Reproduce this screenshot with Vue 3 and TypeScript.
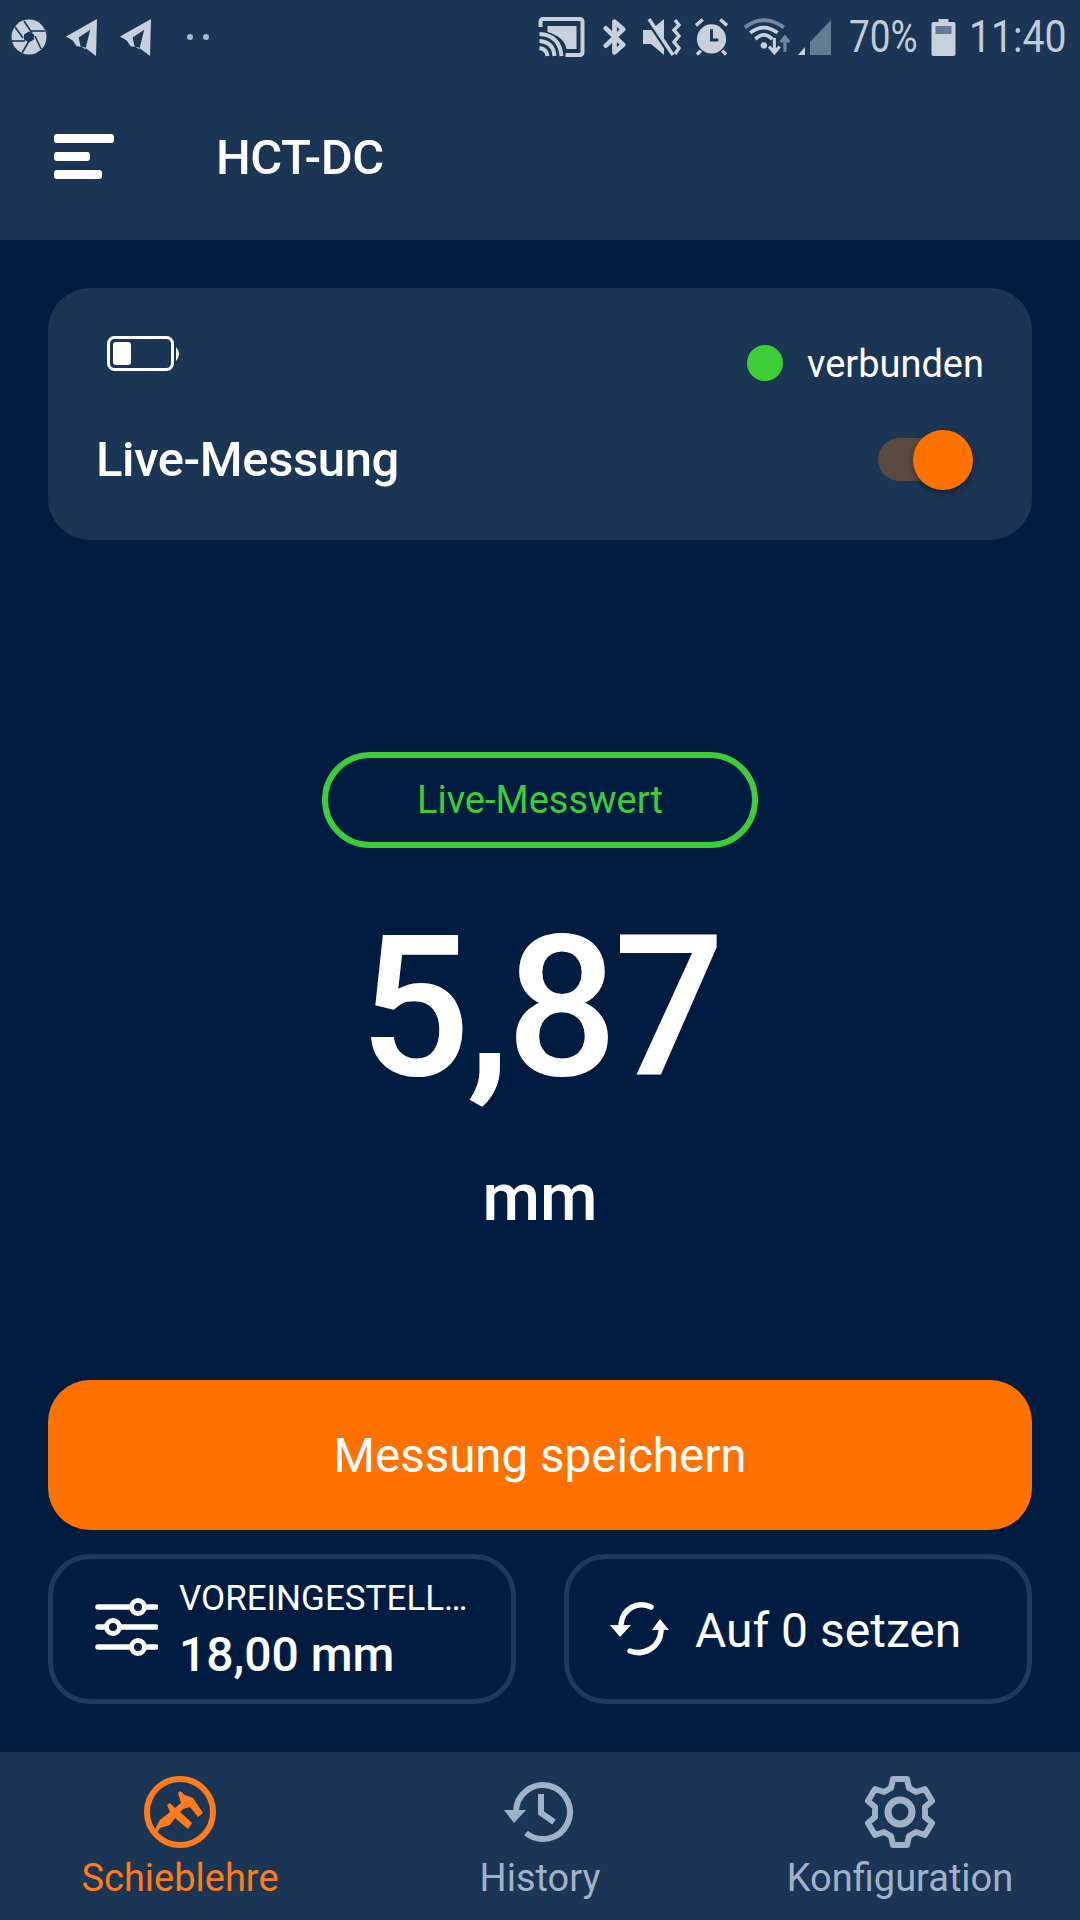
<script setup lang="ts">
const title = 'HCT-DC'
const reading = '5,87'
</script>

<template>
  <div class="screen">
    <header class="top">
      <div class="status">
        <div class="status-left">
          <svg class="s-aperture" viewBox="0 0 36 36"><circle cx="18" cy="18" r="17.500" fill="#c8d1db"/><g stroke="#1b3654" stroke-width="1.600" fill="none"><path d="M13 2 L21 14"/><path d="M34 12 L20 12"/><path d="M30 30 L24 17"/><path d="M11 34 L18 22"/><path d="M1 22 L14 22"/><path d="M4 8 L12 19"/></g><path d="M18 12.500 L23 15.500 L23 20.500 L18 23.500 L13 20.500 L13 15.500 Z" fill="#1b3654"/></svg>
          <svg class="s-plane" viewBox="0 0 32 38"><path fill="#c8d1db" fill-rule="evenodd" d="M32 0 L31 38 L19 29 L11 28 L7 22 L0 18 Z M13 19 L25 11 L20 31 L15 28 Z"/></svg>
          <svg class="s-plane" viewBox="0 0 32 38"><path fill="#c8d1db" fill-rule="evenodd" d="M32 0 L31 38 L19 29 L11 28 L7 22 L0 18 Z M13 19 L25 11 L20 31 L15 28 Z"/></svg>
          <span class="s-dots"><i></i><i></i></span>
        </div>
        <div class="status-right">
          <svg class="s-cast" viewBox="0 0 46 40"><path fill="none" stroke="#c8d1db" stroke-width="4" d="M2 10 V5 Q2 2 5 2 H41 Q44 2 44 5 V35 Q44 38 41 38 H27"/><path fill="#c8d1db" d="M9 9 H38 V32 H28 Q26 20 9 15 Z"/><g fill="none" stroke="#c8d1db" stroke-width="4"><path d="M1 17 Q21 18 23 39"/><path d="M1 24 Q15 25 16 39"/><path d="M1 31 Q8 32 9 39"/></g></svg>
          <svg class="s-bt" viewBox="0 0 24 38"><path fill="none" stroke="#c8d1db" stroke-width="5" stroke-linecap="round" stroke-linejoin="round" d="M3 10 L21 27 L12 35 V3 L21 11 L3 28"/></svg>
          <svg class="s-mute" viewBox="0 0 38 38"><path fill="#c8d1db" d="M0 12 H8 L21 1 V37 L8 26 H0 Z"/><path stroke="#1b3654" stroke-width="3" d="M3 1 L27 37"/><path stroke="#c8d1db" stroke-width="3.500" d="M6 1 L30 37"/><path fill="none" stroke="#c8d1db" stroke-width="3.500" d="M32 2 L36 7 L31 12 L36 18 L31 24 L36 30 L32 36"/></svg>
          <svg class="s-alarm" viewBox="0 0 36 38"><circle cx="18" cy="21" r="15" fill="#c8d1db"/><path d="M18 11 V22 H25" fill="none" stroke="#1b3654" stroke-width="3"/><path d="M2 7 L9 1 M27 1 L34 7 M7 33 L3 37 M29 33 L33 37" stroke="#c8d1db" stroke-width="3.500"/></svg>
          <svg class="s-wifi" viewBox="0 0 44 38"><path d="M1 10 Q19 -4 38 10" fill="none" stroke="#73889f" stroke-width="3.500"/><path d="M6 15 Q19 5 32 15" fill="none" stroke="#c8d1db" stroke-width="3.500"/><path d="M11 21 Q19 13 27 21" fill="none" stroke="#c8d1db" stroke-width="3.500"/><circle cx="19" cy="27" r="3" fill="#c8d1db"/><path d="M29 20 V32 M24 28 L29 34 L34 28" fill="none" stroke="#c8d1db" stroke-width="3"/><path d="M39 33 V20 M35 24 L39 19 L43 24" fill="none" stroke="#73889f" stroke-width="3"/></svg>
          <svg class="s-signal" viewBox="0 0 34 38"><path fill="#c8d1db" d="M0 37 L7 29 V37 Z"/><path fill="#647b94" d="M12 37 V24 L33 2 V37 Z"/></svg>
          <span class="s-pct">70%</span>
          <svg class="s-batt" viewBox="0 0 24 38"><path fill="#c8d1db" d="M7 1 H17 V4 H22 Q24 4 24 6 V36 Q24 38 22 38 H2 Q0 38 0 36 V6 Q0 4 2 4 H7 Z"/><rect x="4" y="8" width="16" height="8" fill="#647b94"/></svg>
          <span class="s-time">11:40</span>
        </div>
      </div>
      <div class="toolbar">
        <span class="menu"><i class="m1"></i><i class="m2"></i><i class="m3"></i></span>
        <span class="title">{{ title }}</span>
      </div>
    </header>

    <main class="main">
      <section class="card">
        <div class="card-row first">
          <svg class="batt" viewBox="0 0 74 36"><rect x="1.500" y="1.500" width="64" height="32" rx="6" fill="none" stroke="#fff" stroke-width="3"/><rect x="6" y="6" width="18" height="23" rx="3" fill="#fff"/><path d="M69 11 Q75 18 69 25 Z" fill="#fff"/></svg>
          <div class="conn"><span class="dot"></span><span>verbunden</span></div>
        </div>
        <div class="card-row second">
          <span class="live">Live-Messung</span>
          <span class="toggle"><i class="thumb"></i></span>
        </div>
      </section>

      <div class="reading">
        <div class="pill">Live-Messwert</div>
        <div class="value">{{ reading }}</div>
        <div class="unit">mm</div>
      </div>

      <button class="save">Messung speichern</button>

      <div class="actions">
        <div class="action">
          <svg class="sliders" viewBox="0 0 64 62"><g stroke="#fff" stroke-width="5.500" stroke-linecap="round" fill="none"><path d="M4 11 H62"/><path d="M4 31 H62"/><path d="M4 51 H62"/></g><g fill="#001d41" stroke="#fff" stroke-width="5"><circle cx="44" cy="11" r="6.500"/><circle cx="19" cy="31" r="6.500"/><circle cx="44" cy="51" r="6.500"/></g></svg>
          <div class="preset">
            <span class="preset-label">VOREINGESTELL…</span>
            <span class="preset-value">18,00 mm</span>
          </div>
        </div>
        <div class="action">
          <svg class="sync" viewBox="0 0 60 54"><g fill="none" stroke="#fff" stroke-width="5.500" stroke-linecap="round"><path d="M41 5 C28 -1 13 6 11 22"/><path d="M20 49 C33 54 50 46 51 29"/></g><path fill="#fff" d="M0 23 H21 L10 35 Z"/><path fill="#fff" d="M42 28 H59 L50 17 Z"/></svg>
          <span class="reset">Auf 0 setzen</span>
        </div>
      </div>
    </main>

    <nav class="nav">
      <div class="tab active">
        <svg class="tab-icon" viewBox="0 0 72 72"><circle cx="36" cy="36" r="33" fill="none" stroke="#ff7b1c" stroke-width="6"/><path fill="#ff7b1c" d="M11 53 L16 44 L26 36 L23 29 L26 27 L31 32 L37 27 L34 17 L36 15 L41 19 L49 22 L59 37 L54 41 L46 31 L39 33 L36 36 L48 47 L44 53 L31 42 L26 49 L16 52 L13 57 Z"/></svg>
        <span>Schieblehre</span>
      </div>
      <div class="tab">
        <svg class="tab-icon" viewBox="0 0 72 72"><g fill="none" stroke="#a0b2c8" stroke-width="6"><path d="M12 36 A27 27 0 1 1 22 57"/><path d="M37 18 V37 L50 46"/></g><path fill="#a0b2c8" d="M0 34 H22 L10 47 Z"/></svg>
        <span>History</span>
      </div>
      <div class="tab">
        <svg class="tab-icon" viewBox="0 0 72 72"><path fill="none" stroke="#a0b2c8" stroke-width="6" stroke-linejoin="round" d="M29 3 H43 L45 12 L52 16 L61 13 L68 25 L61 31 V41 L68 47 L61 59 L52 56 L45 60 L43 69 H29 L27 60 L20 56 L11 59 L4 47 L11 41 V31 L4 25 L11 13 L20 16 L27 12 Z"/><circle cx="36" cy="36" r="12" fill="none" stroke="#a0b2c8" stroke-width="7"/></svg>
        <span>Konfiguration</span>
      </div>
    </nav>
  </div>
</template>

<style>
html, body { margin: 0; padding: 0; background: #001d41; }
</style>

<style scoped>
.screen {
  width: 1080px;
  height: 1920px;
  display: flex;
  flex-direction: column;
  background: #001d41;
  color: #fff;
  font-family: Roboto, "Liberation Sans", sans-serif;
  overflow: hidden;
}
i { display: block; }

.top { height: 240px; background: #1b3654; flex: none; }
.status { height: 72px; display: flex; justify-content: space-between; align-items: center; padding: 2px 16px 0 11px; box-sizing: border-box; }
.status-left, .status-right { display: flex; align-items: center; }
.s-aperture { width: 36px; height: 36px; }
.s-plane { width: 31px; height: 37px; margin-left: 19px; }
.s-plane + .s-plane { margin-left: 23px; }
.s-dots { display: flex; gap: 10px; margin-left: 36px; }
.s-dots i { width: 6px; height: 6px; border-radius: 50%; background: #a9b7c6; }
.s-cast { width: 47px; height: 40px; }
.s-bt { width: 23px; height: 38px; margin-left: 18px; }
.s-mute { width: 38px; height: 38px; margin-left: 17px; }
.s-alarm { width: 35px; height: 38px; margin-left: 13px; }
.s-wifi { width: 48px; height: 40px; margin-left: 14px; }
.s-signal { width: 34px; height: 38px; margin-left: 7px; }
.s-pct, .s-time { font-size: 45px; font-weight: 400; color: #c2ccd8; line-height: 44px; white-space: nowrap; transform-origin: left center; display: block; }
.s-pct { width: 68px; margin-left: 17px; transform: scaleX(.82); }
.s-batt { width: 25px; height: 38px; margin-left: 14px; }
.s-time { width: 95px; margin-left: 13px; transform: scaleX(.87); }

.toolbar { height: 168px; display: flex; align-items: center; padding-left: 54px; box-sizing: border-box; }
.menu { display: flex; flex-direction: column; gap: 9px; width: 126px; flex: none; }
.menu i { height: 9px; border-radius: 3px; background: #fff; }
.m1 { width: 60px; } .m2 { width: 36px; } .m3 { width: 48px; }
.title { font-size: 49px; font-weight: 500; letter-spacing: -0.5px; margin-left: 36px; margin-top: 2px; }

.main { flex: 1; min-height: 0; padding: 48px 48px 0; display: flex; flex-direction: column; }
.card { height: 252px; background: #1b3654; border-radius: 42px; padding: 50px 48px 0; box-sizing: border-box; flex: none; }
.card-row { display: flex; justify-content: space-between; align-items: center; }
.first { height: 52px; }
.batt { width: 74px; height: 36px; margin: -20px 0 0 11px; }
.conn { display: flex; align-items: center; gap: 24px; font-size: 38px; }
.dot { width: 36px; height: 36px; border-radius: 50%; background: #3dcd38; margin-top: -3px; }
.second { height: 70px; margin-top: 35px; }
.live { font-size: 49px; font-weight: 500; letter-spacing: -0.4px; margin-top: -2px; }
.toggle { position: relative; width: 62px; height: 43px; border-radius: 22px; background: #5a4a42; margin: -2px 44px 0 0; }
.thumb { position: absolute; top: -8px; right: -33px; width: 60px; height: 60px; border-radius: 50%; background: #ff7200; box-shadow: 0 3px 6px rgba(0,0,0,.4); }

.reading { height: 840px; flex: none; display: flex; flex-direction: column; align-items: center; padding-top: 212px; box-sizing: border-box; }
.pill { width: 436px; height: 96px; border: 6px solid #3dcd38; border-radius: 48px; box-sizing: border-box; display: flex; align-items: center; justify-content: center; color: #3dcd38; font-size: 38px; }
.value { font-size: 196px; font-weight: 500; line-height: 200px; margin-top: 60px; letter-spacing: -4px; }
.unit { font-size: 66px; font-weight: 500; line-height: 70px; margin-top: 55px; }

.save { height: 150px; border: 0; background: #ff7200; color: #fff; border-radius: 42px; font: 400 47.500px Roboto, sans-serif; flex: none; padding: 2px 0 0; }
.actions { display: grid; grid-template-columns: 1fr 1fr; gap: 48px; margin-top: 24px; }
.action { height: 150px; border: 5px solid #1e3a5a; border-radius: 42px; box-sizing: border-box; display: flex; align-items: center; padding-left: 41px; }
.sliders { width: 64px; height: 62px; flex: none; margin-top: -4px; }
.preset { display: flex; flex-direction: column; margin-left: 21px; padding-top: 6px; }
.preset-label { font-size: 35px; line-height: 40px; }
.preset-value { font-size: 48px; font-weight: 500; line-height: 60px; margin-top: 6px; }
.sync { width: 60px; height: 54px; flex: none; }
.reset { font-size: 48px; margin: 2px 0 0 25px; }

.nav { height: 168px; flex: none; background: #1b3654; display: grid; grid-template-columns: repeat(3, 360px); }
.tab { display: flex; flex-direction: column; align-items: center; padding-top: 24px; box-sizing: border-box; color: #a0b2c8; font-size: 38px; }
.tab span { line-height: 44px; margin-top: 8px; }
.tab.active { color: #ff7b1c; }
.tab-icon { width: 72px; height: 72px; }
</style>
